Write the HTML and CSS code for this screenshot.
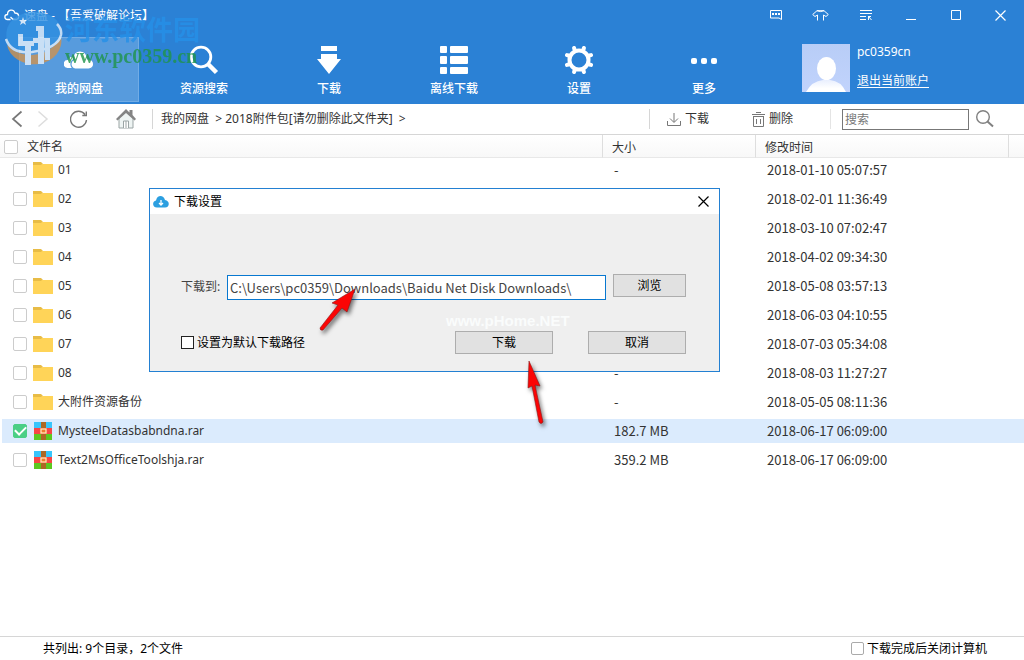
FILE: index.html
```html
<!DOCTYPE html>
<html lang="zh-CN">
<head>
<meta charset="utf-8">
<title>速盘</title>
<link rel="stylesheet" href="styles.css">
</head>
<body>
<svg class="defs" width="0" height="0" aria-hidden="true">
  <symbol id="folder" viewBox="0 0 20 16"><path d="M0 16V0h8l2 2h10v14z" fill="#e8bc46"/><path d="M0 3h8l1-1h11v14H0z" fill="#ffd458"/></symbol>
  <symbol id="rar" viewBox="0 0 18 18"><path fill="#38c5fb" d="M0 0h18v6H0z"/><path fill="#f84545" d="M0 6h18v6H0z"/><path fill="#5dc820" d="M0 12h18v6H0z"/><path fill="#ad6825" d="M7 0h5v6H7zM7 12h5v6H7z"/><rect x="7" y="7" width="5" height="4" fill="#f07830" stroke="#ffe9b0" stroke-width="1.300"/></symbol>
</svg>
<div class="app">
  <header class="header">
    <div class="titlebar">
      <svg class="title-logo" width="16" height="12" viewBox="0 0 16 12" fill="none" stroke="#fff" stroke-width="1.3"><path d="M6.500 10.500H3.500C0 10.500 0 5.500 3.500 5.500C3.500.500 9.500-.500 11 4c4.500 0 5 5.500 1.500 6.500H9M9 10.500 6.500 8"/></svg>
      <h1 class="title">速盘 - 【吾爱破解论坛】</h1>
      <div class="window-buttons">
        <button type="button" aria-label="反馈"><svg width="12" height="10" viewBox="0 0 12 10"><path d="M.5.5h11v9l-2.500-1.500H.5z" fill="none" stroke="#fff"/><path d="M2 3h2v2H2zM5 3h2v2H5zM8 3h2v2H8z" fill="#fff"/></svg></button>
        <button type="button" aria-label="皮肤"><svg width="17" height="11" viewBox="0 0 17 11" fill="none" stroke="#fff"><path d="M5.500 10.500V5L3 6.500.700 4.500 5 .700Q8.500 2.500 12 .700l4.300 3.800L14 6.500 11.500 5v5.500M5 .700h7"/></svg></button>
        <button type="button" aria-label="菜单"><svg width="12" height="11" viewBox="0 0 12 11" fill="none" stroke="#fff"><path d="M0 .5h12M0 3.500h12M0 6.500h6M0 9.500h6M8 6.500h3M8.500 6v4M8.500 6.500l3 3.500"/></svg></button>
        <button type="button" aria-label="最小化"><svg width="10" height="10" viewBox="0 0 10 10"><path d="M0 9.500h10" stroke="#fff"/></svg></button>
        <button type="button" aria-label="最大化"><svg width="10" height="10" viewBox="0 0 10 10"><path d="M.5.5h9v9h-9z" fill="none" stroke="#fff"/></svg></button>
        <button type="button" aria-label="关闭"><svg width="11" height="11" viewBox="0 0 11 11"><path d="M.5.5l10 10M10.500.5l-10 10" stroke="#fff" stroke-width="1.200"/></svg></button>
      </div>
    </div>
    <div class="header-main">
      <nav class="tabs">
        <button type="button" class="tab tab-active"><svg width="30" height="20" viewBox="0 0 30 20"><g fill="#fff"><path d="M3.500 18A4 4 0 0 1 4 10a4.500 4.500 0 0 1 6-3v11z"/><path d="M11 19a5 5 0 0 1-1-9.500C8 4 12 1 16 1c4 0 7 3 7.500 8 8 0 8 10 1 10z" stroke="#579bdd" stroke-width="1.200"/></g></svg>我的网盘</button>
        <button type="button" class="tab"><svg width="30" height="30" viewBox="0 0 30 30" fill="none" stroke="#fff"><circle cx="12" cy="12" r="9.800" stroke-width="2.800"/><path d="M19 19l8.500 8.500" stroke-width="4.500"/></svg>资源搜索</button>
        <button type="button" class="tab"><svg width="24" height="28" viewBox="0 0 24 28" fill="#fff"><path d="M4 0h16v5H4zM4 8h16v5h4L12 28 0 13h4z"/></svg>下载</button>
        <button type="button" class="tab"><svg width="28" height="28" viewBox="0 0 28 28" fill="#fff"><rect width="7" height="7" rx="1"/><rect x="10" width="18" height="7" rx="1"/><rect y="10" width="7" height="8" rx="1"/><rect x="10" y="10" width="18" height="8" rx="1"/><rect y="21" width="7" height="7" rx="1"/><rect x="10" y="21" width="18" height="7" rx="1"/></svg>离线下载</button>
        <button type="button" class="tab"><svg width="28" height="28" viewBox="-14 -14 28 28"><circle r="9.500" fill="none" stroke="#fff" stroke-width="4"/><g stroke="#fff" stroke-width="4" stroke-linecap="round"><path d="M4.500-10.500 4.900-12M-4.500-10.500-4.900-12M4.500 10.500 4.900 12M-4.500 10.500-4.900 12M10.500-4.500 12-4.900M-10.500-4.500-12-4.900M10.500 4.500 12 4.900M-10.500 4.500-12 4.900"/></g></svg>设置</button>
        <button type="button" class="tab"><svg width="28" height="28" viewBox="0 0 28 28" fill="#fff"><rect x="1" y="12" width="6" height="6" rx="2"/><rect x="11" y="12" width="6" height="6" rx="2"/><rect x="21" y="12" width="6" height="6" rx="2"/></svg>更多</button>
      </nav>
      <div class="user">
        <svg width="48" height="48" viewBox="0 0 48 48"><defs><linearGradient id="av" x2="0" y2="1"><stop stop-color="#b8cdf7"/><stop offset="1" stop-color="#c1d3fc"/></linearGradient><linearGradient id="sh" x2="0" y2="1"><stop stop-color="#e9effe"/><stop offset=".7" stop-color="#fff"/></linearGradient></defs><path fill="url(#av)" d="M0 0h48v48H0z"/><path fill="url(#sh)" d="M4 48Q10 37 21 36h7q11 1 16 12z"/><ellipse cx="24.500" cy="24.500" rx="9.500" ry="11.500" fill="#fff"/></svg>
        <div class="user-text"><span class="user-name">pc0359cn</span><a href="#" class="logout">退出当前账户</a></div>
      </div>
    </div>
    <div class="brand-mark">
      <svg width="58" height="56" viewBox="0 0 58 56"><path d="M2 33a27 23 0 0 0 54-8q-6 10-16 15Q20 49 2 33z" fill="#cf9350"/><path d="M3 32C-4 12 12 0 29 0c19 0 29 11 26 23q-3 9-15 14-20 8-37-5z" fill="#3593e2"/><path d="M1 27Q6 42 27 40q26-4 29-17c1-5-1-8-4-11" fill="none" stroke="#e6f1fc" stroke-width="2.500"/><path d="M13 22h5v7h11v5h-3v19h-6V34h-7zM31 14h8v38h-6V31h-5v-5h5v-7h-2zM39 26h6v22h-5z" fill="#e6f1fc"/><path d="M18 5l1 3h3l-2 2 1 3-3-2-3 2 1-3-2-2h3z" fill="#fff"/></svg>
      <div class="brand-text"><span class="brand-name">河东软件园</span><span class="brand-url">www.pc0359.cn</span></div>
    </div>
  </header>

  <div class="toolbar">
    <div class="history">
      <button type="button" aria-label="后退"><svg width="12" height="18" viewBox="0 0 12 18"><path d="M10.500 1.500 2 9l8.500 7.500" fill="none" stroke="#777" stroke-width="1.700"/></svg></button>
      <button type="button" aria-label="前进"><svg width="12" height="18" viewBox="0 0 12 18"><path d="M1.500 1.500 10 9l-8.500 7.500" fill="none" stroke="#ddd" stroke-width="1.500"/></svg></button>
      <button type="button" class="refresh" aria-label="刷新"><svg width="18" height="18" viewBox="0 0 18 18" fill="none" stroke="#777" stroke-width="1.400"><path d="M16.500 10A8 8 0 1 1 15 4.500M16.300 1.500v4h-4"/></svg></button>
      <button type="button" aria-label="主页"><svg width="20" height="20" viewBox="0 0 20 20"><path d="M3 9v10h14V9l-7-6z" fill="#eef4f3" stroke="#9ba5a5"/><path d="M7.500 19v-7h5v7M10 12v7" fill="#fff" stroke="#9ba5a5"/><path d="M0 10 10 0l3.500 3.500V1h3v5L20 10l-1.500 1.500L10 4l-8.500 7.500z" fill="#848484"/></svg></button>
    </div>
    <div class="crumbs">我的网盘&nbsp; &gt; 2018附件包[请勿删除此文件夹]&nbsp; &gt;</div>
    <div class="actions">
      <button type="button"><svg width="14" height="13" viewBox="0 0 14 13" fill="none" stroke="#777"><path d="M.5 8v4.500h13V8M7 0v9M3 5.500l4 4 4-4"/></svg>下载</button>
      <button type="button"><svg width="13" height="15" viewBox="0 0 13 15" fill="none" stroke="#777"><path d="M0 2.500h13M4 .5h5M1.500 5v9.500h10V5M1 4.500h11M4.500 7v5M8.500 7v5"/></svg>删除</button>
    </div>
    <form class="search">
      <input type="text" placeholder="搜索" aria-label="搜索">
      <button type="button" aria-label="开始搜索"><svg width="18" height="18" viewBox="0 0 18 18" fill="none" stroke="#808080"><circle cx="7" cy="7" r="6.300" stroke-width="1.400"/><path d="M11.500 11.500l5.500 5" stroke-width="2"/></svg></button>
    </form>
  </div>

  <main class="content">
    <table class="files">
      <colgroup><col><col class="col-size"><col class="col-time"><col class="col-end"></colgroup>
      <thead><tr><th><label class="name"><input type="checkbox" class="check">文件名</label></th><th>大小</th><th>修改时间</th><th></th></tr></thead>
      <tbody>
        <tr><td><label class="name"><input type="checkbox" class="check"><svg width="20" height="16"><use href="#folder"/></svg>01</label></td><td>-</td><td>2018-01-10 05:07:57</td><td></td></tr>
        <tr><td><label class="name"><input type="checkbox" class="check"><svg width="20" height="16"><use href="#folder"/></svg>02</label></td><td>-</td><td>2018-02-01 11:36:49</td><td></td></tr>
        <tr><td><label class="name"><input type="checkbox" class="check"><svg width="20" height="16"><use href="#folder"/></svg>03</label></td><td>-</td><td>2018-03-10 07:02:47</td><td></td></tr>
        <tr><td><label class="name"><input type="checkbox" class="check"><svg width="20" height="16"><use href="#folder"/></svg>04</label></td><td>-</td><td>2018-04-02 09:34:30</td><td></td></tr>
        <tr><td><label class="name"><input type="checkbox" class="check"><svg width="20" height="16"><use href="#folder"/></svg>05</label></td><td>-</td><td>2018-05-08 03:57:13</td><td></td></tr>
        <tr><td><label class="name"><input type="checkbox" class="check"><svg width="20" height="16"><use href="#folder"/></svg>06</label></td><td>-</td><td>2018-06-03 04:10:55</td><td></td></tr>
        <tr><td><label class="name"><input type="checkbox" class="check"><svg width="20" height="16"><use href="#folder"/></svg>07</label></td><td>-</td><td>2018-07-03 05:34:08</td><td></td></tr>
        <tr><td><label class="name"><input type="checkbox" class="check"><svg width="20" height="16"><use href="#folder"/></svg>08</label></td><td>-</td><td>2018-08-03 11:27:27</td><td></td></tr>
        <tr><td><label class="name"><input type="checkbox" class="check"><svg width="20" height="16"><use href="#folder"/></svg>大附件资源备份</label></td><td>-</td><td>2018-05-05 08:11:36</td><td></td></tr>
        <tr class="selected"><td><label class="name"><input type="checkbox" class="check" checked><svg width="20" height="18"><use href="#rar"/></svg>MysteelDatasbabndna.rar</label></td><td>182.7 MB</td><td>2018-06-17 06:09:00</td><td></td></tr>
        <tr><td><label class="name"><input type="checkbox" class="check"><svg width="20" height="18"><use href="#rar"/></svg>Text2MsOfficeToolshja.rar</label></td><td>359.2 MB</td><td>2018-06-17 06:09:00</td><td></td></tr>
      </tbody>
    </table>
  </main>

  <footer class="status">
    <span>共列出: 9个目录，2个文件</span>
    <label class="shutdown"><input type="checkbox" class="check">下载完成后关闭计算机</label>
  </footer>

  <section class="dialog" role="dialog" aria-labelledby="dialog-title">
    <div class="dialog-bar">
      <svg width="16" height="12" viewBox="0 0 16 12"><path d="M4 11.500C-1 11.500-1 5 3 4.500 4-1 10.500-1.500 12 4c5 .500 5 7.500 0 7.500z" fill="#2c9fe0"/><path d="M8 4v5M6 7l2 2 2-2" fill="none" stroke="#fff" stroke-width="1.300"/></svg>
      <h2 id="dialog-title">下载设置</h2>
      <button type="button" class="dialog-close" aria-label="关闭设置"><svg width="11" height="11" viewBox="0 0 11 11"><path d="M.5.5l10 10M10.500.5l-10 10" stroke="#000" stroke-width="1.200"/></svg></button>
    </div>
    <form class="dialog-body">
      <div class="path-row">
        <label for="path">下载到:</label>
        <input id="path" type="text" value="C:\Users\pc0359\Downloads\Baidu Net Disk Downloads\">
        <button type="button" class="push browse">浏览</button>
      </div>
      <div class="confirm-row">
        <label class="default-path"><input type="checkbox" class="check check-dark">设置为默认下载路径</label>
        <button type="button" class="push">下载</button>
        <button type="button" class="push">取消</button>
      </div>
    </form>
    <span class="site-mark">www.pHome.NET</span>
    <svg class="arrow arrow-path" width="46" height="52" viewBox="0 0 46 52"><path d="M4 43 22 20 16 18 39 4 31 27 26 23 7 45Q4 46 4 43z" fill="#fb0505" stroke="#8a1a1a" stroke-width=".6"/></svg>
    <svg class="arrow arrow-ok" width="34" height="74" viewBox="0 0 34 74"><path d="M8 4 19 29 14 28 22 65Q20 68 18 65L11 29 7 31z" fill="#fb0505" stroke="#8a1a1a" stroke-width=".6"/></svg>
  </section>
</div>
</body>
</html>
```

FILE: styles.css
```css
* { box-sizing: border-box; }
body {
  margin: 0;
  font: 12px/16px "Noto Sans", "Noto Sans CJK SC", sans-serif;
  color: #333;
  background: #fff;
}
button, input { font: inherit; color: inherit; }
button { padding: 0; border: 0; background: none; }
svg { flex: none; display: block; }
.defs { position: absolute; }
.app { position: relative; display: flex; flex-direction: column; min-height: 100vh; }

.header { position: relative; height: 104px; background: #2b81d5; color: #fff; }
.titlebar { display: flex; align-items: center; height: 30px; padding: 0 1px 0 4px; gap: 4px; }
.title { margin: 0; padding-top: 2px; font-size: 12px; font-weight: 400; }
.window-buttons { display: flex; margin-left: auto; }
.window-buttons button { display: flex; align-items: center; justify-content: center; width: 45px; height: 30px; }
.header-main { display: flex; padding: 7px 95px 0 19px; }
.tabs { display: flex; gap: 5px; }
.tab {
  display: grid;
  grid-template-rows: 42px 16px;
  align-content: start;
  align-items: center;
  justify-items: center;
  width: 120px;
  height: 65px;
  padding-top: 1px;
  border: 1px solid transparent;
  font-weight: 500;
}
.tab-active { background: #579bdd; border-color: #71ace5; }
.user { display: flex; gap: 7px; margin: 7px 0 0 auto; }
.user-text { display: flex; flex-direction: column; gap: 13px; }
.user-name { font-size: 12px; }
.logout { color: #fff; text-underline-offset: 2px; }
.brand-mark { position: absolute; left: 5px; top: 12px; display: flex; gap: 2px; opacity: 0.8; pointer-events: none; }
.brand-text { display: flex; flex-direction: column; gap: 4px; padding-top: 4px; }
.brand-name { font: 700 27px/26px "Noto Sans CJK SC", sans-serif; color: #2590e8; }
.brand-url { font: 700 20px/20px "Liberation Serif", serif; color: #1f944a; }

.toolbar { display: flex; align-items: center; height: 31px; border-bottom: 1px solid #d6d6d6; padding: 0 30px 0 11px; }
.history { display: flex; align-items: center; gap: 14px; padding-right: 16px; }
.history .refresh { margin: 0 14px 0 7px; }
.crumbs { flex: 1; padding-left: 8px; border-left: 1px solid #d6d6d6; line-height: 20px; }
.actions { display: flex; gap: 43px; padding: 0 37px 0 17px; border-left: 1px solid #d6d6d6; border-right: 1px solid #e4e4e4; line-height: 20px; }
.actions button { display: flex; align-items: center; gap: 4px; }
.search { display: flex; align-items: center; gap: 7px; padding-left: 11px; }
.search input { width: 127px; height: 21px; padding: 0 2px; border: 1px solid #777; }
.search input::placeholder { color: #777; opacity: 1; }

.content { flex: 1; }
.files { width: 100%; table-layout: fixed; border-collapse: separate; border-spacing: 0; }
.col-size { width: 153px; }
.col-time { width: 253px; }
.col-end { width: 15px; }
.files th {
  height: 23px;
  padding: 3px 9px 0;
  border-right: 1px solid #dedede;
  border-bottom: 1px solid #e8e8e8;
  background: linear-gradient(#fff, #f8f8f8);
  font-weight: 400;
  text-align: left;
}
.files th:first-child { padding: 2px 4px 0; }
.files th:last-child { border-right: 0; padding: 0; }
.files td {
  height: 29px;
  padding: 0 11px;
  border-bottom: 5px solid transparent;
  background-clip: padding-box;
  font: 13px/16px "Noto Sans CJK SC", sans-serif;
}
.files td:first-child { border-left: 2px solid transparent; font: inherit; }
.files td:last-child { padding: 0; }
.selected td { background-color: #dbebfd; }
.name { display: flex; align-items: center; gap: 5px; }
.files td .check { margin-right: 1px; }
.files th .name { gap: 9px; }

.check {
  appearance: none;
  flex: none;
  width: 14px;
  height: 14px;
  margin: 0;
  border: 1px solid #ccc;
  border-radius: 2px;
  background: #fff;
}
.check:checked {
  display: grid;
  place-items: center;
  border-color: #4bcf86;
  background: #4bcf86;
}
.check:checked::after {
  content: "";
  width: 9px;
  height: 5px;
  margin-bottom: 3px;
  border: solid #fff;
  border-width: 0 0 2px 2px;
  transform: rotate(-45deg);
}
.check-dark { width: 13px; height: 13px; border-color: #222; border-radius: 0; }

.status { display: flex; justify-content: space-between; align-items: center; height: 24px; padding: 0 37px 0 43px; border-top: 1px solid #d6d6d6; color: #000; }
.shutdown { display: flex; align-items: center; gap: 3px; }
.shutdown .check { width: 13px; height: 13px; border-color: #aaa; }

.dialog { position: absolute; left: 149px; top: 188px; width: 571px; border: 1px solid #2380d2; background: #efefef; color: #000; }
.dialog-bar { display: flex; align-items: center; gap: 5px; height: 25px; padding: 0 10px 0 3px; background: #fff; }
.dialog-bar h2 { margin: 0; font-size: 12px; font-weight: 400; }
.dialog-close { margin-left: auto; }
.dialog-body { padding: 60px 33px 17px 31px; }
.path-row { display: flex; align-items: flex-start; color: #444; }
.path-row label { width: 46px; padding-top: 5px; }
.path-row input {
  flex: 1;
  min-width: 0;
  height: 25px;
  margin: 1px 7px 0 0;
  padding: 0 2px;
  border: 1px solid #0878d0;
  background: #fff;
  font: 13px/16px "Noto Sans CJK SC", sans-serif;
}
.confirm-row { display: flex; align-items: center; gap: 35px; margin-top: 31px; }
.default-path { display: flex; align-items: center; gap: 3px; margin-right: auto; }
.push { width: 98px; height: 23px; border: 1px solid #adadad; background: #e1e1e1; color: #000; }
.browse { width: 73px; }
.site-mark { position: absolute; left: 296px; top: 124px; font: 700 15px/16px "Liberation Sans", sans-serif; color: #fafcfc; }
.arrow { position: absolute; filter: drop-shadow(2px 3px 2px #0008); pointer-events: none; }
.arrow-path { left: 166px; top: 96px; }
.arrow-ok { left: 371px; top: 168px; }
```
